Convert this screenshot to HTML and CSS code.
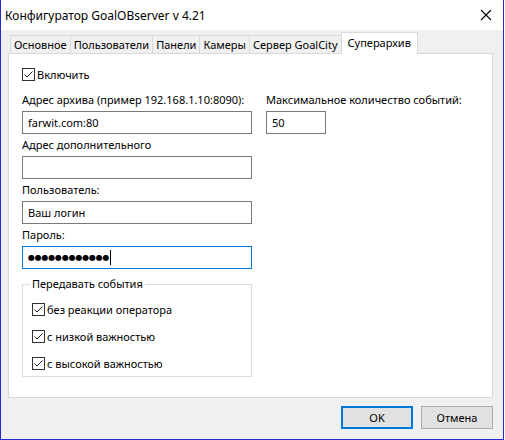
FILE: index.html
```html
<!DOCTYPE html>
<html lang="ru">
<head>
    <meta charset="UTF-8">
    <title>Конфигуратор GoalOBserver v 4.21</title>
    <link rel="stylesheet" href="styles.css">
</head>
<body>
    <div class="window">
        <div class="titlebar">
            <span class="title">Конфигуратор GoalOBserver v 4.21</span>
            <svg class="close" width="12" height="12" viewBox="0 0 12 12">
                <path d="M1 1 L11 11 M11 1 L1 11" stroke="#000" stroke-width="1.1" fill="none"/>
            </svg>
        </div>
        <div class="client">
            <div class="tabs">
                <div class="tab">Основное</div>
                <div class="tab">Пользователи</div>
                <div class="tab">Панели</div>
                <div class="tab">Камеры</div>
                <div class="tab">Сервер GoalCity</div>
                <div class="tab active">Суперархив</div>
            </div>
            <div class="panel">
                <label class="check enable">
                    <span class="box"><svg width="11" height="11" viewBox="0 0 11 11"><path d="M1.5 5.5 L4 8 L9.5 2.5" stroke="#222" stroke-width="1" fill="none"/></svg></span>
                    Включить
                </label>
                <div class="cols">
                    <div class="col-left">
                        <div class="field-label">Адрес архива (пример 192.168.1.10:8090):</div>
                        <div class="input">farwit.com:80</div>
                        <div class="field-label">Адрес дополнительного</div>
                        <div class="input"></div>
                        <div class="field-label">Пользователь:</div>
                        <div class="input">Ваш логин</div>
                        <div class="field-label">Пароль:</div>
                        <div class="input focused"><span class="dots">●●●●●●●●●●●●</span><span class="caret"></span></div>

                        <fieldset class="group">
                            <legend>Передавать события</legend>
                            <label class="check">
                                <span class="box"><svg width="11" height="11" viewBox="0 0 11 11"><path d="M1.5 5.5 L4 8 L9.5 2.5" stroke="#222" stroke-width="1" fill="none"/></svg></span>
                                без реакции оператора
                            </label>
                            <label class="check">
                                <span class="box"><svg width="11" height="11" viewBox="0 0 11 11"><path d="M1.5 5.5 L4 8 L9.5 2.5" stroke="#222" stroke-width="1" fill="none"/></svg></span>
                                с низкой важностью
                            </label>
                            <label class="check">
                                <span class="box"><svg width="11" height="11" viewBox="0 0 11 11"><path d="M1.5 5.5 L4 8 L9.5 2.5" stroke="#222" stroke-width="1" fill="none"/></svg></span>
                                с высокой важностью
                            </label>
                        </fieldset>
                    </div>
                    <div class="col-right">
                        <div class="field-label">Максимальное количество событий:</div>
                        <div class="input small">50</div>
                    </div>
                </div>
            </div>
            <div class="buttons">
                <button class="btn default">OK</button>
                <button class="btn">Отмена</button>
            </div>
        </div>
    </div>
</body>
</html>
```

FILE: styles.css
```css
body {
    margin: 0;
    font-family: "Noto Sans", "Open Sans", sans-serif;
    font-size: 11px;
    color: #000;
    background: #fff;
}
.window {
    width: 504px;
    height: 440px;
    box-sizing: border-box;
    border: 1px solid #2828d4;
    border-top: none;
    background: #f0f0f0;
    display: flex;
    flex-direction: column;
}
.titlebar {
    height: 30px;
    background: #fff;
    display: flex;
    align-items: center;
    justify-content: space-between;
    padding: 0 11px 0 4px;
}
.title {
    font-size: 12px;
}
.close {
    margin-top: -1px;
}
.client {
    flex: 1;
    padding: 2px 10px 0 7px;
    display: flex;
    flex-direction: column;
}
.tabs {
    display: flex;
    align-items: flex-end;
    height: 21px;
    padding-left: 2px;
    white-space: nowrap;
}
.tab {
    height: 17px;
    line-height: 18px;
    padding: 0 3px;
    border: 1px solid #d9d9d9;
    border-bottom: none;
    margin-left: -1px;
    background: #f0f0f0;
}
.tab:first-child {
    margin-left: 0;
}
.tab.active {
    height: 21px;
    line-height: 19px;
    background: #fff;
    margin-bottom: -1px;
    padding: 0 6px;
    position: relative;
    z-index: 1;
}
.panel {
    height: 345px;
    box-sizing: border-box;
    background: #fff;
    border: 1px solid #d9d9d9;
    padding: 13px 13px 0 13px;
}
.check {
    display: flex;
    align-items: center;
    height: 15px;
    white-space: nowrap;
}
.box {
    width: 11px;
    height: 11px;
    border: 1px solid #333;
    margin-right: 2px;
    display: flex;
}
.enable {
    margin-bottom: 10px;
}
.cols {
    display: flex;
    gap: 14px;
}
.col-left {
    width: 230px;
}
.field-label {
    height: 16px;
    line-height: 16px;
    margin-bottom: 3px;
    white-space: nowrap;
}
.input {
    height: 21px;
    border: 1px solid #7a7a7a;
    line-height: 21px;
    padding-left: 5px;
    margin-bottom: 3px;
    display: flex;
    align-items: center;
}
.input.small {
    width: 53px;
}
.input.focused {
    border-color: #0078d7;
}
.dots {
    font-family: "DejaVu Sans", sans-serif;
    font-size: 8px;
    letter-spacing: -0.2px;
}
.caret {
    width: 1px;
    height: 15px;
    background: #000;
    margin-left: 1px;
}
.group {
    margin: 8px 0 0 0;
    padding: 11px 9px 0 9px;
    height: 100px;
    box-sizing: border-box;
    border: 1px solid #dcdcdc;
}
.group legend {
    padding: 0 2px;
    margin-left: -2px;
    line-height: 14px;
}
.group .check {
    margin-bottom: 12px;
}
.buttons {
    display: flex;
    justify-content: flex-end;
    gap: 8px;
    margin-top: 8px;
}
.btn {
    width: 72px;
    height: 23px;
    font-family: inherit;
    font-size: 11px;
    background: #e1e1e1;
    border: 1px solid #adadad;
    padding: 0;
}
.btn.default {
    border: 2px solid #0078d7;
}
```
